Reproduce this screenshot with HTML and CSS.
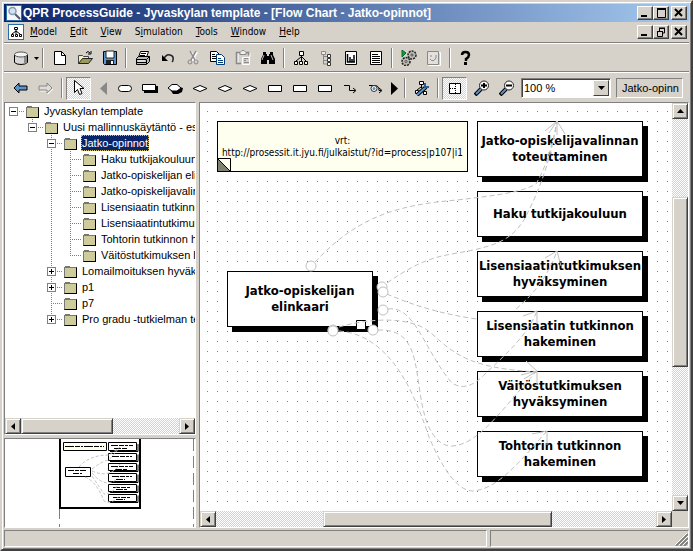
FILE: index.html
```html
<!DOCTYPE html>
<html lang="fi">
<head>
    <meta charset="UTF-8">
    <meta name="viewport" content="width=device-width, initial-scale=1.0">
    <title>QPR ProcessGuide - Jyvaskylan template</title>
    <link rel="stylesheet" href="styles.css">
</head>
<body>
<div class="window">
    <header class="titlebar">
        <svg class="app-icon" width="16" height="16"><rect x="0.5" y="0.5" width="15" height="15" fill="#f4f8fc" stroke="#2b6ca8"/><path d="M9 9l5 5" stroke="#556" stroke-width="2"/><circle cx="6.5" cy="6" r="3.5" fill="#cfe4f5" stroke="#8a9aaa" stroke-width="1.5"/></svg>
        <h1>QPR ProcessGuide - Jyvaskylan template - [Flow Chart - Jatko-opinnot]</h1>
        <div class="win-buttons">
            <button class="win-btn" aria-label="Minimize"><svg width="12" height="10"><path d="M2 8h6" stroke="#000" stroke-width="2"/></svg></button>
            <button class="win-btn" aria-label="Maximize"><svg width="12" height="10"><path d="M2 1h9M2.5 1v8.5h8V1" fill="none" stroke="#000"/><path d="M2 1h9" stroke="#000" stroke-width="2"/></svg></button>
            <button class="win-btn close" aria-label="Close"><svg width="12" height="10"><path d="M2 1l7 7M9 1l-7 7" stroke="#000" stroke-width="2"/></svg></button>
        </div>
    </header>

    <nav class="menubar">
        <svg class="doc-icon" width="16" height="16"><rect x="0.5" y="0.5" width="15" height="15" fill="#fff" stroke="#2b6ca8"/><path d="M6.5 3.5h3v2h-3zM3.5 10.5h2v2h-2zM7.5 10.5h2v2h-2zM11.5 10.5h2v2h-2zM8 6v4M8 7l-4 3M8 7l4 3" fill="none" stroke="#000"/></svg>
        <a href="#"><u>M</u>odel</a>
        <a href="#"><u>E</u>dit</a>
        <a href="#"><u>V</u>iew</a>
        <a href="#">S<u>i</u>mulation</a>
        <a href="#"><u>T</u>ools</a>
        <a href="#"><u>W</u>indow</a>
        <a href="#"><u>H</u>elp</a>
        <div class="win-buttons">
            <button class="win-btn" aria-label="Minimize chart"><svg width="12" height="10"><path d="M2 8h6" stroke="#000" stroke-width="2"/></svg></button>
            <button class="win-btn" aria-label="Restore chart"><svg width="12" height="10"><path d="M4 1h6M4.5 1v3M4 1.5h6M9.5 1v5H8M2.5 4v5.5h5V4M2 4.5h6" fill="none" stroke="#000"/></svg></button>
            <button class="win-btn close" aria-label="Close chart"><svg width="12" height="10"><path d="M2 1l7 7M9 1l-7 7" stroke="#000" stroke-width="2"/></svg></button>
        </div>
    </nav>

    <div class="toolbar standard">
        <button class="tool" aria-label="Repository"><svg width="16" height="16"><path d="M1.5 4.5v8q2 2 6.500 2t6.500-2v-8" fill="#d8d8d8" stroke="#000"/><path d="M11 6h3v7l-3 1z" fill="#8a8a8a"/><ellipse cx="8" cy="4.500" rx="6.500" ry="2.500" fill="#f4f4f4" stroke="#555"/></svg></button>
        <button class="tool drop" aria-label="Repository list"><svg width="5" height="3"><path d="M0 0h5L2.500 3z"/></svg></button>
        <span class="sep"></span>
        <button class="tool" aria-label="New"><svg width="16" height="16"><path d="M2.500 1.500h7l4 4v9h-11z" fill="#fff" stroke="#000"/><path d="M9.500 1.500v4h4" fill="none" stroke="#000"/></svg></button>
        <button class="tool" aria-label="Open"><svg width="16" height="16"><path d="M1.500 13.500v-8h4l1 1h5v3" fill="#f2f0c0" stroke="#444"/><path d="M1.500 13.500l4-5h10l-4 5z" fill="#9a9a5a" stroke="#222"/><path d="M9 3q2-3 4 0M14 1v3h-3" fill="none" stroke="#000"/></svg></button>
        <button class="tool" aria-label="Save"><svg width="16" height="16"><path d="M1.500 1.500h13v13h-12l-1-1z" fill="#5b93cc" stroke="#000"/><path d="M4 1h8v7H4z" fill="#fff" stroke="#222"/><path d="M4 10h8v4H4z" fill="#222"/><path d="M9 11h2v3H9z" fill="#fff"/></svg></button>
        <span class="sep"></span>
        <button class="tool" aria-label="Print"><svg width="16" height="16"><path d="M5.500 1.500h8l-2 6h-8z" fill="#fff" stroke="#000"/><path d="M6 3.500h5M5 5.500h5" stroke="#000"/><path d="M1.500 8.500l2-2h11v5l-3 3h-10z" fill="#bbb" stroke="#000"/><path d="M2 9.500h9.500l3-3M2 12.500h9M11.500 10v4" stroke="#000" fill="none"/><path d="M3 11h7" stroke="#fff"/></svg></button>
        <button class="tool" aria-label="Undo"><svg width="16" height="16"><path d="M4 9q2-5 6-4q4 1 3 5q0 1-1 2" fill="none" stroke="#222" stroke-width="1.500"/><path d="M2 5v6h6z" fill="#000"/></svg></button>
        <button class="tool" aria-label="Cut" disabled><svg width="16" height="16"><g fill="none"><path d="M6 2l5 9M12 2L7 11" stroke="#fff" stroke-width="2"/><path d="M5 1l5 9M11 1L6 10" stroke="#888" stroke-width="1.500"/><circle cx="5" cy="12" r="2" stroke="#888"/><circle cx="11" cy="12" r="2" stroke="#888"/></g></svg></button>
        <button class="tool" aria-label="Copy"><svg width="16" height="16"><path d="M0.500 1.500h6l3 3v7h-9z" fill="#fff" stroke="#000"/><path d="M2 4.500h3M2 6.500h5M2 8.500h5" stroke="#000"/><path d="M6.500 4.500h5l3 3v7h-8z" fill="#fff" stroke="#003a78"/><path d="M8 8.500h3M8 10.500h5M8 12.500h5" stroke="#003a78"/></svg></button>
        <button class="tool" aria-label="Paste" disabled><svg width="16" height="16"><g fill="none"><path d="M3 3v11M15 3v4" stroke="#fff"/><path d="M5 2.500H1.500v11H6M11 2.500h2.500v3" stroke="#888" stroke-width="1.500"/><path d="M5 4.500v-2l2-2h2l2 2v2z" stroke="#888" fill="#eee"/><path d="M7.500 7.500h7v7h-7z" stroke="#fff"/><path d="M9 8.500h4M9 10.500h2M9 12.500h5" stroke="#888"/></g></svg></button>
        <button class="tool" aria-label="Find"><svg width="16" height="16"><path d="M3 2h3v2h1v2h2V4h1V2h3v3l2 4v5H9v-4H7v4H1V9l2-4z"/><path d="M4 5l-2 5M11 5l2 5" stroke="#bbb"/></svg></button>
        <span class="sep"></span>
        <button class="tool" aria-label="Organisation"><svg width="16" height="16"><path d="M6.500 1.500h4v4h-4zM1.500 11.500h3v3h-3zM6.500 11.500h3v3h-3zM11.500 11.500h3v3h-3z" fill="#fff" stroke="#000"/><path d="M8.500 5v6M8 7l-5 4M9 7l4 4" stroke="#000" fill="none"/></svg></button>
        <button class="tool" aria-label="Hierarchy"><svg width="16" height="16"><path d="M3.500 1.500h4v3h-4z" fill="#eee" stroke="#888"/><path d="M5.500 5v9H9M5.500 6.500H9M5.500 10.500H9" fill="none" stroke="#888"/><path d="M9.500 4.500h3v3h-3zM9.500 8.500h3v3h-3zM9.500 12.500h3v3h-3z" fill="#fff" stroke="#333"/></svg></button>
        <button class="tool" aria-label="Chart"><svg width="16" height="16"><path d="M2.500 1.500h11v13h-11z" fill="#fff" stroke="#000"/><path d="M4.500 4v8H12M7 7v5M9 9v3M11 5v7" fill="none" stroke="#000" stroke-width="1.500"/></svg></button>
        <button class="tool" aria-label="Report"><svg width="16" height="16"><path d="M2.500 1.500h11v13h-11z" fill="#fff" stroke="#000"/><path d="M4 4.500h6M4 6.500h8M4 8.500h8M4 10.500h8M4 12.500h8" stroke="#000"/></svg></button>
        <span class="sep"></span>
        <button class="tool" aria-label="Run"><svg width="16" height="16"><path d="M1 0l4 3-4 4z" fill="#18a018" stroke="#063"/><g fill="#b8b8b0" stroke="#222" stroke-dasharray="2 1" stroke-width="1.500"><circle cx="11" cy="5" r="4"/><circle cx="5" cy="11.500" r="4"/></g><circle cx="11" cy="5" r="1" fill="#fff" stroke="#444"/><circle cx="5" cy="11.500" r="1" fill="#fff" stroke="#444"/></svg></button>
        <button class="tool" aria-label="Monitor" disabled><svg width="16" height="16"><path d="M2.500 2.500h12v13h-12z" fill="none" stroke="#fff"/><path d="M1.500 1.500h11v13h-11z" fill="#e4e1dc" stroke="#888"/><path d="M4 9q3 4 6-1V5M5 5v2" fill="none" stroke="#888"/></svg></button>
        <span class="sep"></span>
        <button class="tool" aria-label="Help"><svg width="16" height="16"><path d="M3 5q0-3 3.500-3T10 5q0 2-3 4v2" fill="none" stroke="#000" stroke-width="2.500"/><path d="M5 12h3v3H5z"/></svg></button>
    </div>

    <div class="toolbar drawing">
        <button class="tool" aria-label="Back"><svg width="16" height="16"><path d="M1 8l5-5v3h8v4H6v3z" fill="#5b93cc" stroke="#000"/></svg></button>
        <button class="tool" aria-label="Forward" disabled><svg width="16" height="16"><path d="M15 9l-5 5v-3H2" fill="none" stroke="#fff"/><path d="M14 8L9 3v3H1v4h8v3z" fill="#e0ddd8" stroke="#888"/></svg></button>
        <span class="sep"></span>
        <button class="tool pressed" aria-label="Select"><svg width="16" height="18"><path d="M3.500 1.500v12l3-3 2 5 2.500-1-2-5h4z" fill="#fff" stroke="#000"/></svg></button>
        <button class="tool narrow" aria-label="Previous shapes"><svg width="7" height="13"><path d="M7 0v13L0 6.500z" fill="#888"/></svg></button>
        <button class="tool" aria-label="Rounded box"><svg width="16" height="16"><rect x="1.500" y="5.500" width="13" height="6" rx="3" fill="#fff" stroke="#000"/></svg></button>
        <button class="tool" aria-label="Process"><svg width="16" height="16"><path d="M2 6h14v7H2z"/><path d="M0.500 4.500h13v6h-13z" fill="#fff" stroke="#000"/></svg></button>
        <button class="tool" aria-label="Activity"><svg width="16" height="16"><path d="M3 9l6-3 7 2-1 4-4 2H6z"/><path d="M1 8l4-3.500h5L14 8l-4 3H5z" fill="#fff" stroke="#000"/></svg></button>
        <button class="tool" aria-label="Decision"><svg width="16" height="16"><path d="M1 8.500l7-3 7 3-7 3z" fill="#fff" stroke="#000"/></svg></button>
        <button class="tool" aria-label="Decision and"><svg width="16" height="16"><path d="M1 8.500l7-3 7 3-7 3z" fill="#fff" stroke="#000"/></svg></button>
        <button class="tool" aria-label="Decision or"><svg width="16" height="16"><path d="M1 8.500l7-3 7 3-7 3z" fill="#fff" stroke="#000"/></svg></button>
        <button class="tool" aria-label="Store"><svg width="16" height="16"><path d="M1.500 5.500h13v6h-13z" fill="#fff" stroke="#000"/></svg></button>
        <button class="tool" aria-label="Delay"><svg width="16" height="16"><path d="M1.500 5.500h13v6h-13z" fill="#fff" stroke="#000"/></svg></button>
        <button class="tool" aria-label="Text box"><svg width="16" height="16"><path d="M1.500 5.500h13v6h-13z" fill="#fff" stroke="#000"/></svg></button>
        <button class="tool" aria-label="Connector"><svg width="16" height="16"><path d="M2 5.500h5.500v5H13M11 8l3 2.500-3 2.500" fill="none" stroke="#000"/></svg></button>
        <button class="tool" aria-label="Flow"><svg width="16" height="16"><path d="M2 5.500h6q4 0 4 5h2M12 8l3 2.500-3 2.500" fill="none" stroke="#000"/><circle cx="7" cy="8.500" r="3" fill="#fff" stroke="#333"/><circle cx="7" cy="8.500" r="1.500" fill="#5b93cc"/></svg></button>
        <button class="tool narrow next" aria-label="Next shapes"><svg width="7" height="13"><path d="M0 0v13l7-6.500z"/></svg></button>
        <span class="sep"></span>
        <button class="tool" aria-label="Layout"><svg width="16" height="16"><path d="M5.500 1.500h4v3h-4zM1.500 10.500h3v3h-3zM9.500 11.500h3v3h-3z" fill="#fff" stroke="#000"/><path d="M7.500 5v3M7 7l-4 3" stroke="#000"/><path d="M3 15L12 7" stroke="#000" stroke-width="4"/><path d="M3 15L12 7" stroke="#5b93cc" stroke-width="2"/><path d="M11 3v4h4" fill="none" stroke="#2a5f96" stroke-width="2"/></svg></button>
        <span class="sep"></span>
        <button class="tool pressed" aria-label="Page guides"><svg width="16" height="16"><path d="M2.500 3.500h11v10h-11z" fill="#fff" stroke="#000"/><path d="M8.500 4v10M3 8.500h5" stroke="#000" stroke-dasharray="1 1"/></svg></button>
        <button class="tool zoom" aria-label="Zoom in"><svg width="16" height="16"><path d="M1 15l6-6" stroke="#000" stroke-width="4"/><path d="M2 14l5-5" stroke="#5b93cc" stroke-width="2"/><circle cx="10" cy="5.500" r="4.500" fill="#fff" stroke="#222"/><path d="M7 5.500h6M10 3v5" stroke="#000" stroke-width="2"/></svg></button>
        <button class="tool" aria-label="Zoom out"><svg width="16" height="16"><path d="M1 15l6-6" stroke="#000" stroke-width="4"/><path d="M2 14l5-5" stroke="#5b93cc" stroke-width="2"/><circle cx="10" cy="5.500" r="4.500" fill="#fff" stroke="#222"/><path d="M7 5.500h6" stroke="#000" stroke-width="2"/></svg></button>
        <div class="zoom-box">
            <select aria-label="Zoom"><option>100 %</option><option>50 %</option></select>
            <span class="arrow"><svg width="7" height="4"><path d="M0 0h7L3.500 4z"/></svg></span>
        </div>
        <output class="current">Jatko-opinn</output>
    </div>

    <main class="workspace">
        <aside class="side">
            <section class="tree-panel">
                <ul class="tree">
                    <li><i class="cell h"><button class="expander minus" aria-label="Collapse"></button></i><i class="cell folder"></i><span class="label">Jyvaskylan template</span></li>
                    <li><i class="cell"></i><i class="cell last h"><button class="expander minus" aria-label="Collapse"></button></i><i class="cell folder"></i><span class="label">Uusi mallinnuskäytäntö - esi</span></li>
                    <li><i class="cell"></i><i class="cell"></i><i class="cell v h"><button class="expander minus" aria-label="Collapse"></button></i><i class="cell folder"></i><span class="label selected">Jatko-opinnot</span></li>
                    <li><i class="cell"></i><i class="cell"></i><i class="cell v"></i><i class="cell v h"></i><i class="cell folder"></i><span class="label">Haku tutkijakouluun</span></li>
                    <li><i class="cell"></i><i class="cell"></i><i class="cell v"></i><i class="cell v h"></i><i class="cell folder"></i><span class="label">Jatko-opiskelijan elin</span></li>
                    <li><i class="cell"></i><i class="cell"></i><i class="cell v"></i><i class="cell v h"></i><i class="cell folder"></i><span class="label">Jatko-opiskelijavalin</span></li>
                    <li><i class="cell"></i><i class="cell"></i><i class="cell v"></i><i class="cell v h"></i><i class="cell folder"></i><span class="label">Lisensiaatin tutkinno</span></li>
                    <li><i class="cell"></i><i class="cell"></i><i class="cell v"></i><i class="cell v h"></i><i class="cell folder"></i><span class="label">Lisensiaatintutkimuk</span></li>
                    <li><i class="cell"></i><i class="cell"></i><i class="cell v"></i><i class="cell v h"></i><i class="cell folder"></i><span class="label">Tohtorin tutkinnon h</span></li>
                    <li><i class="cell"></i><i class="cell"></i><i class="cell v"></i><i class="cell last h"></i><i class="cell folder"></i><span class="label">Väitöstutkimuksen h</span></li>
                    <li><i class="cell"></i><i class="cell"></i><i class="cell v h"><button class="expander plus" aria-label="Expand"></button></i><i class="cell folder"></i><span class="label">Lomailmoituksen hyväks</span></li>
                    <li><i class="cell"></i><i class="cell"></i><i class="cell v h"><button class="expander plus" aria-label="Expand"></button></i><i class="cell folder"></i><span class="label">p1</span></li>
                    <li><i class="cell"></i><i class="cell"></i><i class="cell v h"></i><i class="cell folder"></i><span class="label">p7</span></li>
                    <li><i class="cell"></i><i class="cell"></i><i class="cell last h"><button class="expander plus" aria-label="Expand"></button></i><i class="cell folder"></i><span class="label">Pro gradu -tutkielman te</span></li>
                </ul>
                <div class="scroll horizontal tree-scroll">
                    <button class="scroll-btn" aria-label="Scroll left"><svg width="4" height="7"><path d="M4 0v7L0 3.500z"/></svg></button>
                    <div class="thumb"></div><div class="after"></div>
                    <button class="scroll-btn" aria-label="Scroll right"><svg width="4" height="7"><path d="M0 0v7l4-3.500z"/></svg></button>
                </div>
            </section>
            <section class="overview">
                <svg width="190" height="88">
                    <g fill="none" stroke="#808080"><path d="M54.500 0v88M188.500 0v88" stroke-dasharray="12 5"/></g>
                    <path d="M55 0v69h80V0" fill="#fff" stroke="#000" stroke-width="2"/>
                    <path d="M58.500 3.500h43v8h-43z" fill="#fffff0" stroke="#000"/>
                    <path d="M60 7.500h39" stroke="#000" stroke-dasharray="9 1 5 1 2 1"/>
                    <path d="M60.500 28.500h25v9h-25z" fill="#fff" stroke="#000"/>
                    <path d="M63 31.500h19M68 34.500h9" stroke="#000" stroke-dasharray="6 1 4 1"/>
                    <g fill="#fff" stroke="#000">
                        <path d="M103.500 3.500h28v8h-28zM103.500 14.500h28v7h-28zM103.500 24.500h28v7h-28zM103.500 34.500h28v8h-28zM103.500 45.500h28v7h-28zM103.500 55.500h28v7h-28z"/>
                        <path d="M105 12.500h28V5M105 22.500h28v-7M105 32.500h28v-7M105 43.500h28v-8M105 53.500h28v-7M105 63.500h28v-7" fill="none"/>
                        <path d="M106 6.500h22M109 9.500h13M107 17.500h20M106 27.500h22M110 30.500h12M107 37.500h20M111 40.500h9M108 48.500h18M111 50.500h11M108 58.500h18M111 60.500h9" stroke-dasharray="7 1 5 1 3 1"/>
                    </g>
                    <path d="M74 28q10-12 30-12l11-8M87 30q10-8 17-9l11-13M87 32q18 8 28-7M87 34q15 18 28 3M80 38q12 5 19 24q8 4 16-6M87 37q8 12 12 18q8 0 14-9" fill="none" stroke="#c0c0c0" stroke-dasharray="3 2"/>
                </svg>
            </section>
        </aside>

        <section class="chart">
            <div class="chart-row">
                <div class="canvas">
                    <div class="note">vrt:<br>http://prosessit.it.jyu.fi/julkaistut/?id=process|p107|i1
                        <svg class="fold" width="13" height="13"><path d="M0 0.500h12.500V13" fill="#fffff0" stroke="#000"/><path d="M0 1l12 12H0z" fill="#808070"/><path d="M0 1l12 12" stroke="#000"/></svg>
                    </div>
                    <div class="node source">Jatko-opiskelijan elinkaari</div>
                    <div class="node target n1">Jatko-opiskelijavalinnan<br>toteuttaminen</div>
                    <div class="node target n2">Haku tutkijakouluun</div>
                    <div class="node target n3">Lisensiaatintutkimuksen<br>hyväksyminen</div>
                    <div class="node target n4">Lisensiaatin tutkinnon<br>hakeminen</div>
                    <div class="node target n5">Väitöstutkimuksen<br>hyväksyminen</div>
                    <div class="node target n6">Tohtorin tutkinnon<br>hakeminen</div>
                    <svg class="links">
                        <g transform="translate(-200 -103)">
                            <path d="M356.500 320.500h9v9h-9z" fill="#fff" stroke="#000"/>
                            <g class="flow">
                                <path d="M315 262C358 216 398 205 457 200C500 195 522 192 536 184Q550 160 557 121"/>
                                <path d="M387 283C420 260 435 257 457 253C500 246 512 238 524 220C537 195 550 165 557 121"/>
                                <path d="M387 294C410 304 440 314 477 319"/>
                                <path d="M516 309Q545 285 557 251"/>
                                <path d="M388 309C415 305 425 352 452 383Q467 393 485 374C505 355 528 335 537 311"/>
                                <path d="M339 327C370 318 410 316 430 332C455 355 470 368 537 372"/>
                                <path d="M378 330C425 328 412 380 427 423Q437 447 453 446C480 444 505 405 537 371"/>
                                <path d="M339 331C395 335 418 405 429 437Q452 491 473 491C500 489 525 455 547 431"/>
                            </g>
                            <g class="heads">
                                <path d="M545 131l12-10 8 13M557 121v14M549 133l8-12"/>
                                <path d="M545 258l12-7 4 15"/>
                                <path d="M523 316l14-5v13"/>
                                <path d="M526 361l11 10-16 4M537 371l-13 8M537 371v14"/>
                                <path d="M532 434l15-3v14"/>
                            </g>
                            <g class="ports">
                                <circle cx="311" cy="266" r="5"/>
                                <circle cx="382" cy="287" r="5"/>
                                <circle cx="383" cy="292" r="5"/>
                                <circle cx="383" cy="310" r="5"/>
                                <circle cx="333" cy="330" r="5"/>
                                <circle cx="333" cy="331" r="5"/>
                                <circle cx="373" cy="330" r="5"/>
                            </g>
                        </g>
                    </svg>
                </div>
                <div class="scroll vertical chart-vscroll">
                    <button class="scroll-btn" aria-label="Scroll up"><svg width="7" height="4"><path d="M0 4h7L3.500 0z"/></svg></button>
                    <div class="before"></div><div class="thumb"></div><div class="after"></div>
                    <button class="scroll-btn" aria-label="Scroll down"><svg width="7" height="4"><path d="M0 0h7L3.500 4z"/></svg></button>
                </div>
            </div>
            <div class="chart-foot">
                <div class="scroll horizontal chart-hscroll">
                    <button class="scroll-btn" aria-label="Scroll left"><svg width="4" height="7"><path d="M4 0v7L0 3.500z"/></svg></button>
                    <div class="before"></div><div class="thumb"></div><div class="after"></div>
                    <button class="scroll-btn" aria-label="Scroll right"><svg width="4" height="7"><path d="M0 0v7l4-3.500z"/></svg></button>
                </div>
            </div>
        </section>
    </main>

    <footer class="statusbar">
        <div class="status wide"></div>
        <div class="status"><svg width="13" height="13"><path d="M1 13L13 1M5 13l8-8M9 13l4-4" stroke="#808080" stroke-width="2"/><path d="M0 12L12 0M4 12l9-9M8 12l5-5" stroke="#fff"/></svg></div>
    </footer>
</div>
</body>
</html>
```

FILE: styles.css
```css
* { box-sizing: border-box; }
body { margin: 0; font-family: "DejaVu Sans Condensed", "DejaVu Sans", sans-serif; font-size: 10px; color: #000; }
button { font: inherit; padding: 0; margin: 0; border: 0; background: none; display: flex; align-items: center; justify-content: center; }
svg { display: block; flex: none; }

.window { height: 100vh; display: flex; flex-direction: column; background: #d6d2ca; padding: 2px; border: 2px solid; border-color: #d6d2ca #404040 #404040 #d6d2ca; box-shadow: inset 1px 1px #fff, inset -1px -1px #808080; }

/* title and menu */
.titlebar { height: 18px; display: flex; align-items: center; padding: 0 2px; background: linear-gradient(to right, #0a246a, #a6caf0); }
.titlebar h1 { flex: 1; margin: 0 0 0 1px; font: bold 12px/18px "Liberation Sans", sans-serif; color: #fff; white-space: nowrap; overflow: hidden; }
.menubar { height: 20px; display: flex; align-items: center; padding: 0 2px; }
.doc-icon { margin: 0 6px 0 2px; }
.menubar a { color: #000; text-decoration: none; margin-right: 13px; line-height: 16px; }
.win-buttons { display: flex; margin-left: auto; }
.win-btn { width: 16px; height: 14px; background: #d6d2ca; border: 1px solid; border-color: #fff #404040 #404040 #fff; box-shadow: inset -1px -1px #808080; }
.win-btn.close { margin-left: 2px; }

/* toolbars */
.toolbar { display: flex; align-items: center; border-top: 1px solid #808080; box-shadow: inset 0 1px #fff; padding: 2px 4px 0; }
.standard { height: 29px; }
.drawing { height: 31px; }
.tool { width: 25px; height: 23px; flex: none; }
.tool.drop { width: 6px; }
.tool.narrow { width: 21px; justify-content: flex-end; padding-right: 5px; }
.tool.next { width: 14px; padding-right: 3px; }
.tool.zoom { margin-left: 2px; }
.tool.pressed { border: 1px solid; border-color: #808080 #fff #fff #808080; background: repeating-conic-gradient(#fff 0 25%, #d6d2ca 0 50%) 0 0 / 2px 2px; }
.sep { width: 2px; height: 20px; margin: 0 3px; flex: none; background: linear-gradient(to right, #808080 50%, #fff 50%); }
.zoom-box { display: flex; width: 90px; height: 20px; flex: none; margin-left: 2px; background: #fff; border: 1px solid; border-color: #808080 #fff #fff #808080; box-shadow: inset 1px 1px #404040; padding: 1px; }
.zoom-box select { flex: 1; min-width: 0; appearance: none; border: 0; background: none; padding: 0 1px; font: 11px "Liberation Sans", sans-serif; }
.zoom-box .arrow { width: 16px; display: flex; align-items: center; justify-content: center; background: #d6d2ca; border: 1px solid; border-color: #fff #404040 #404040 #fff; }
.current { margin-left: 5px; width: 67px; height: 20px; padding-left: 5px; overflow: hidden; white-space: nowrap; font: 11px/18px "Liberation Sans", sans-serif; border: 1px solid; border-color: #808080 #fff #fff #808080; }

/* workspace */
.workspace { flex: 1; min-height: 0; display: flex; gap: 3px; }
.side { width: 192px; flex: none; display: flex; flex-direction: column; gap: 3px; }
.tree-panel { flex: 1; min-height: 0; display: flex; flex-direction: column; background: #fff; border: 1px solid; border-color: #808080 #fff #fff #808080; }
.tree { flex: 1; margin: 0; padding: 0; list-style: none; overflow: hidden; font: 11px "Liberation Sans", sans-serif; }
.tree li { display: flex; height: 16px; }
.cell { --dots: repeating-linear-gradient(to bottom, #808080 0 1px, transparent 1px 2px); --dash: repeating-linear-gradient(to right, #808080 0 1px, transparent 1px 2px); width: 19px; height: 16px; flex: none; background-repeat: no-repeat; }
.cell.h { background: var(--dash) 8px 8px / 11px 1px no-repeat; }
.cell.v { background: var(--dots) 8px 0 / 1px 16px no-repeat; }
.cell.v.h { background: var(--dots) 8px 0 / 1px 16px no-repeat, var(--dash) 8px 8px / 11px 1px no-repeat; }
.cell.last { background: var(--dots) 8px 0 / 1px 8px no-repeat, var(--dash) 8px 8px / 11px 1px no-repeat; }
.expander { width: 9px; height: 9px; margin: 4px; border: 1px solid #808080; background: linear-gradient(#000, #000) 1px 3px / 5px 1px no-repeat, #fff; }
.expander.plus { background: linear-gradient(#000, #000) 1px 3px / 5px 1px no-repeat, linear-gradient(#000, #000) 3px 1px / 1px 5px no-repeat, #fff; }
.cell.folder::before { content: ""; display: block; width: 5px; height: 1px; margin: 3px 0 0 3px; background: #777; }
.cell.folder::after { content: ""; display: block; width: 11px; height: 9px; margin-left: 2px; background: #cfcc9c; border: 1px solid #000; border-top-color: #777; border-left-color: #777; }
.label { line-height: 16px; padding: 0 1px; white-space: nowrap; }
.label.selected { background: #0a246a; color: #fff; outline: 1px dotted #d8c070; outline-offset: -1px; }
.overview { height: 90px; overflow: hidden; background: #fff; border: 1px solid; border-color: #808080 #fff #fff #808080; }

/* scroll bars */
.scroll { display: flex; background: repeating-conic-gradient(#fff 0 25%, #d6d2ca 0 50%) 0 0 / 2px 2px; }
.horizontal { height: 16px; }
.vertical { width: 16px; flex-direction: column; }
.scroll-btn, .thumb { background: #d6d2ca; border: 1px solid; border-color: #d6d2ca #404040 #404040 #d6d2ca; box-shadow: inset 1px 1px #fff, inset -1px -1px #808080; }
.scroll-btn { width: 16px; height: 16px; flex: none; }
.tree-scroll .thumb { flex: 91; }
.tree-scroll .after { flex: 67; }
.chart-vscroll .before { flex: 78; }
.chart-vscroll .thumb { flex: 169; }
.chart-vscroll .after { flex: 129; }
.chart-hscroll { flex: 1; }
.chart-hscroll .before { flex: 107; }
.chart-hscroll .thumb { flex: 229; }
.chart-hscroll .after { flex: 104; }

/* flow chart */
.chart { flex: 1; min-width: 0; display: flex; flex-direction: column; border: 1px solid; border-color: #808080 #fff #fff #808080; }
.chart-row { flex: 1; min-height: 0; display: flex; }
.chart-foot { display: flex; padding-right: 16px; }
.canvas { flex: 1; position: relative; overflow: hidden; background: conic-gradient(at 1px 1px, transparent 75%, #808080 0) 7px 8px / 10px 10px #fff; }
.note { position: absolute; left: 17px; top: 18px; width: 251px; height: 51px; display: grid; place-content: center; text-align: center; background: #fffff0; border: 1px solid #000; font-size: 10px; line-height: 12px; white-space: nowrap; }
.fold { position: absolute; left: 0; bottom: 0; }
.node { position: absolute; display: flex; align-items: center; justify-content: center; text-align: center; background: #fff; border: 1px solid #000; box-shadow: 5px 5px #000; font-size: 13px; line-height: 16px; font-weight: bold; }
.source { left: 27px; top: 168px; width: 146px; height: 56px; padding: 0 10px; }
.target { left: 277px; width: 166px; height: 46px; }
.n1 { top: 18px; height: 56px; }
.n2 { top: 88px; }
.n3 { top: 148px; }
.n4 { top: 208px; }
.n5 { top: 268px; }
.n6 { top: 328px; }
.links { position: absolute; left: 0; top: 0; width: 100%; height: 100%; fill: none; stroke: #c0c0c0; }
.flow { stroke-dasharray: 5 3; }
.ports { fill: #fff; }

/* status bar */
.statusbar { display: flex; gap: 3px; margin-top: 2px; }
.status { flex: 198; height: 17px; border: 1px solid; border-color: #808080 #fff #fff #808080; display: flex; justify-content: flex-end; align-items: flex-end; }
.status.wide { flex: 484; }
```
